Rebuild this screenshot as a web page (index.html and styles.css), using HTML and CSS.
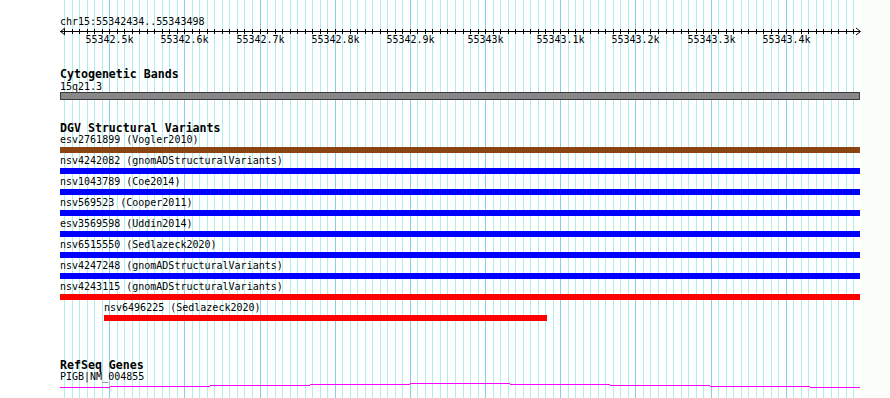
FILE: index.html
```html
<!DOCTYPE html>
<html lang="en">
<head>
    <meta charset="UTF-8">
    <meta name="viewport" content="width=device-width, initial-scale=1.0">
    <title>chr15:55342434..55343498</title>
    <link rel="stylesheet" href="styles.css">
</head>
<body>
    <div class="browser">
        <!-- guide lines lie under every track -->
        <svg class="guides" id="guides" width="890" height="398">
            <rect class="guides-margin" x="861" y="0" width="29" height="398"/>
        </svg>

        <div class="tracks">
            <div class="ruler">
                <div class="position">chr15:55342434..55343498</div>
                <svg class="axis" id="axis" width="800" height="19">
                    <line class="axis-line" x1="0" y1="4.5" x2="800" y2="4.5"/>
                    <polyline class="axis-arrow" points="5,1 0.5,4.5 5,8"/>
                    <polyline class="axis-arrow" points="796,1 800.5,4.5 796,8"/>
                </svg>
            </div>

            <div class="track track-cyto">
                <div class="track-title">Cytogenetic Bands</div>
                <div class="item-label item-label-first">15q21.3</div>
                <div class="band"></div>
            </div>

            <div class="track track-dgv">
                <div class="track-title">DGV Structural Variants</div>
                <div class="sv-list">
                    <div class="sv-row">
                        <div class="item-label">esv2761899 (Vogler2010)</div>
                        <div class="sv-bar sv-loss"></div>
                    </div>
                    <div class="sv-row">
                        <div class="item-label">nsv4242082 (gnomADStructuralVariants)</div>
                        <div class="sv-bar sv-gain"></div>
                    </div>
                    <div class="sv-row">
                        <div class="item-label">nsv1043789 (Coe2014)</div>
                        <div class="sv-bar sv-gain"></div>
                    </div>
                    <div class="sv-row">
                        <div class="item-label">nsv569523 (Cooper2011)</div>
                        <div class="sv-bar sv-gain"></div>
                    </div>
                    <div class="sv-row">
                        <div class="item-label">esv3569598 (Uddin2014)</div>
                        <div class="sv-bar sv-gain"></div>
                    </div>
                    <div class="sv-row">
                        <div class="item-label">nsv6515550 (Sedlazeck2020)</div>
                        <div class="sv-bar sv-gain"></div>
                    </div>
                    <div class="sv-row">
                        <div class="item-label">nsv4247248 (gnomADStructuralVariants)</div>
                        <div class="sv-bar sv-gain"></div>
                    </div>
                    <div class="sv-row">
                        <div class="item-label">nsv4243115 (gnomADStructuralVariants)</div>
                        <div class="sv-bar sv-del"></div>
                    </div>
                    <div class="sv-row" style="padding-left: 44px;">
                        <div class="item-label">nsv6496225 (Sedlazeck2020)</div>
                        <div class="sv-bar sv-del" style="width: 443px;"></div>
                    </div>
                </div>
            </div>

            <div class="track track-refseq">
                <div class="track-title">RefSeq Genes</div>
                <div class="item-label gene-label">PIGB|NM_004855</div>
                <svg class="gene" width="800" height="7">
                    <path class="gene-line" d="M0 5.5H50 M50 4.5H150 M150 3.5H250 M250 2.5H350 M350 1.5H450 M450 2.5H550 M550 3.5H650 M650 4.5H750 M750 5.5H800"/>
                </svg>
            </div>
        </div>
    </div>

    <script>
        // ruler ticks and guide lines, one every 10 bp
        var start = 55342434, end = 55343498, left = 60, width = 800;
        var scale = width / (end - start);
        var ns = 'http://www.w3.org/2000/svg';
        var guides = document.getElementById('guides');
        var axis = document.getElementById('axis');

        function add(parent, tag, attrs, text) {
            var el = document.createElementNS(ns, tag);
            for (var k in attrs) el.setAttribute(k, attrs[k]);
            if (text) el.textContent = text;
            parent.appendChild(el);
        }

        for (var p = Math.ceil(start / 10) * 10; p < end; p += 10) {
            var x = Math.floor((p - start) * scale) + 0.5;
            var major = p % 100 === 0;
            add(guides, 'line', { x1: left + x, y1: 0, x2: left + x, y2: 398, 'class': major ? 'guide guide-major' : 'guide' });
            add(axis, 'line', { x1: x, y1: 2, x2: x, y2: 7, 'class': 'axis-tick' });
            if (major) {
                add(axis, 'text', { x: x, y: 16, 'class': 'axis-label' }, (p / 1000) + 'k');
            }
        }
    </script>
</body>
</html>
```

FILE: styles.css
```css
body {
    margin: 0;
    background: #fff;
    color: #000;
    font-family: "DejaVu Sans Mono", monospace;
}

.browser {
    position: relative;
    width: 890px;
    height: 398px;
    overflow: hidden;
    background: #fff;
}

/* guide lines */
.guides {
    position: absolute;
    top: 0;
    left: 0;
}

.guides-margin {
    fill: #fafdfa;
}

.guide {
    stroke: #afeeee;
    stroke-width: 1;
}

.guide-major {
    stroke: #87ceeb;
}

.tracks {
    position: relative;
    z-index: 1;
    width: 800px;
    padding-left: 60px;
}

/* ruler */
.ruler {
    padding-top: 17px;
}

.position, .item-label {
    font-size: 10px;
    line-height: 10px;
    white-space: pre;
}

.axis {
    display: block;
    overflow: visible;
}

.axis-line, .axis-tick, .axis-arrow {
    stroke: #000;
    stroke-width: 1;
    fill: none;
}

.axis-label {
    font-family: "DejaVu Sans Mono", monospace;
    font-size: 10px;
    text-anchor: middle;
    fill: #000;
}

/* tracks */
.track {
    margin-top: 22px;
}

.track-refseq {
    margin-top: 35px;
}

.track-title {
    font-size: 11.6px;
    line-height: 12px;
    font-weight: bold;
    white-space: pre;
}

.item-label-first {
    margin-top: 2px;
}

.band {
    box-sizing: border-box;
    width: 800px;
    height: 8px;
    border: 1px solid #3a3a3a;
    background: #888;
}

.sv-list {
    padding-top: 1px;
}

.sv-row {
    padding-bottom: 3px;
}

.sv-bar {
    width: 800px;
    height: 6px;
    margin-top: 2px;
}

.sv-loss {
    background: #8b4513;
}

.sv-gain {
    background: #0000ff;
}

.sv-del {
    background: #ff0000;
}

.gene-label {
    margin-top: 1px;
}

.gene {
    display: block;
}

.gene-line {
    stroke: #ff00ff;
    stroke-width: 1;
    fill: none;
}
```
